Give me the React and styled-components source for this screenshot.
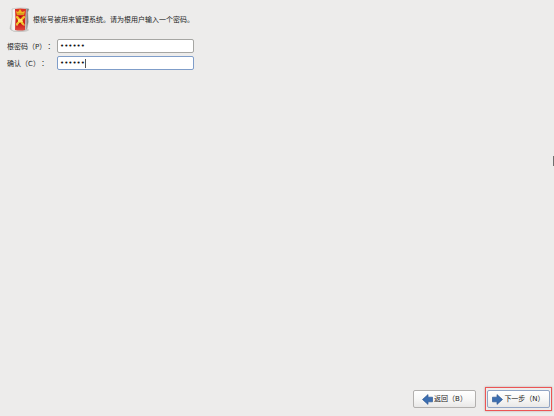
import { useState } from "react";
import styled, { createGlobalStyle } from "styled-components";

const GlobalStyle = createGlobalStyle`
  * {
    box-sizing: border-box;
  }

  body {
    margin: 0;
    background: #edeceb;
    color: #1c1c1c;
    font-family: "DejaVu Sans", "Noto Sans CJK SC", sans-serif;
    font-size: 7px;
    line-height: 12px;
  }
`;

const Page = styled.form`
  position: relative;
  display: flex;
  flex-direction: column;
  justify-content: space-between;
  min-height: 100vh;
  padding: 7px 2px 5px 7px;
  overflow: hidden;
`;

const Intro = styled.div`
  display: flex;
  align-items: center;
  gap: 1px;
  margin-bottom: 6px;

  > p {
    margin: 0;
  }
`;

const Fields = styled.div`
  display: grid;
  grid-template-columns: 46px 137px;
  column-gap: 4px;
  row-gap: 3px;
  align-items: center;

  > label {
    white-space: nowrap;
  }
`;

const Colon = styled.span`
  margin-left: 3px;
  font-family: "Noto Sans CJK TC", sans-serif;
`;

const Field = styled.div`
  display: flex;
  align-items: center;
  height: 14px;
  padding: 0 2px;
  background: #ffffff;
  border: 1px solid ${({ $active }) => ($active ? "#7f9dc9" : "#a6a6a3")};
  border-radius: 2px;
`;

const PasswordInput = styled.input`
  field-sizing: content;
  min-width: 5px;
  max-width: 100%;
  padding: 0;
  border: 0;
  outline: 0;
  background: transparent;
  color: #111111;
  caret-color: transparent;
  font-family: "DejaVu Sans", sans-serif;
  font-size: 7px;
  line-height: 10px;
`;

const Caret = styled.span`
  width: 1px;
  height: 9px;
  background: #555555;
`;

const Footer = styled.footer`
  display: flex;
  justify-content: flex-end;
  align-items: center;
  gap: 9px;
`;

const Highlight = styled.div`
  padding: 2px 1px;
  border: 1px solid #ec5555;
  box-shadow: 0 0 2px #b9a5a4;
`;

const NavButton = styled.button`
  display: flex;
  align-items: center;
  justify-content: center;
  gap: 1px;
  width: 63px;
  height: 18px;
  padding: 0;
  border: 1px solid ${({ $primary }) => ($primary ? "#91a5c4" : "#b2b0ae")};
  border-radius: 2px;
  background: linear-gradient(#ffffff, #f7f7f6 50%, #e9e8e7);
  color: inherit;
  font: inherit;
  white-space: nowrap;
`;

const EdgeHandle = styled.span`
  position: absolute;
  top: 156px;
  right: 0;
  width: 1px;
  height: 10px;
  background: #6f6f6f;
`;

const ShieldIcon = () => (
  <svg width="25" height="26" viewBox="0 0 25 26" aria-hidden="true">
    <defs>
      <linearGradient id="steel" x1="0" x2="1">
        <stop offset="0" stopColor="#b4b4b2" />
        <stop offset="0.15" stopColor="#f6f6f5" />
        <stop offset="0.78" stopColor="#dededc" />
        <stop offset="0.9" stopColor="#8d8d8b" />
        <stop offset="1" stopColor="#5e5e5c" />
      </linearGradient>
      <linearGradient id="banner" x1="0" x2="0" y1="0" y2="1">
        <stop offset="0" stopColor="#e03326" />
        <stop offset="0.7" stopColor="#cf1c16" />
        <stop offset="1" stopColor="#df4a40" />
      </linearGradient>
    </defs>
    <ellipse cx="13" cy="23" rx="9" ry="2" fill="#cbcac8" />
    <path
      d="M5 2Q9 1 14 1Q19 1 22 2Q20 5 21 9Q22 15 20 22Q17 24 12 24Q6 25 3 22Q3 20 4 17Q6 10 5 2Z"
      fill="url(#steel)"
      stroke="#acacaa"
      strokeWidth="0.5"
    />
    <path d="M8 2Q13 1 19 2Q18 12 18 23Q13 24 8 23Q9 12 8 2Z" fill="url(#banner)" />
    <path d="M9 4L11 5L13 2L15 5L18 4L17 8L10 8Z" fill="#efb722" />
    <path d="M10 7L17 7" stroke="#a9680f" strokeWidth="0.6" />
    <path
      d="M10 10L16 17M17 10L10 17"
      stroke="#f1c62a"
      strokeWidth="2.2"
      strokeLinecap="round"
    />
    <path d="M11 12L15 12L16 15L11 15Z" fill="#f9e566" />
    <path d="M12 9L15 9L13 11ZM12 17L14 17L13 16Z" fill="#8c1710" />
    <path d="M9 18L11 18M16 18L18 18" stroke="#f5d96a" strokeWidth="0.8" />
  </svg>
);

const ArrowIcon = ({ flip }) => (
  <svg width="11" height="11" viewBox="0 0 11 11" aria-hidden="true">
    <path
      d="M0.5 3.2H5V0.6L10.5 5.5L5 10.4V7.8H0.5Z"
      transform={flip ? "matrix(-1 0 0 1 11 0)" : undefined}
      fill="#3c6eb0"
      stroke="#2f5a95"
      strokeWidth="0.7"
      strokeLinejoin="round"
    />
  </svg>
);

const App = () => {
  const [password, setPassword] = useState("secret");
  const [confirm, setConfirm] = useState("secret");

  return (
    <>
      <GlobalStyle />
      <Page lang="zh-CN" onSubmit={(e) => e.preventDefault()}>
        <main>
          <Intro>
            <ShieldIcon />
            <p>根帐号被用来管理系统。请为根用户输入一个密码。</p>
          </Intro>
          <Fields>
            <label htmlFor="password">
              根密码（P）<Colon lang="zh-TW">：</Colon>
            </label>
            <Field>
              <PasswordInput
                id="password"
                type="password"
                value={password}
                onChange={(e) => setPassword(e.target.value)}
              />
            </Field>
            <label htmlFor="confirm">
              确认（C）<Colon lang="zh-TW">：</Colon>
            </label>
            <Field $active>
              <PasswordInput
                id="confirm"
                type="password"
                value={confirm}
                onChange={(e) => setConfirm(e.target.value)}
              />
              <Caret />
            </Field>
          </Fields>
        </main>
        <Footer>
          <NavButton type="button">
            <ArrowIcon flip />
            返回（B）
          </NavButton>
          <Highlight>
            <NavButton type="submit" $primary>
              <ArrowIcon />
              下一步（N）
            </NavButton>
          </Highlight>
        </Footer>
        <EdgeHandle />
      </Page>
    </>
  );
};

export default App;
